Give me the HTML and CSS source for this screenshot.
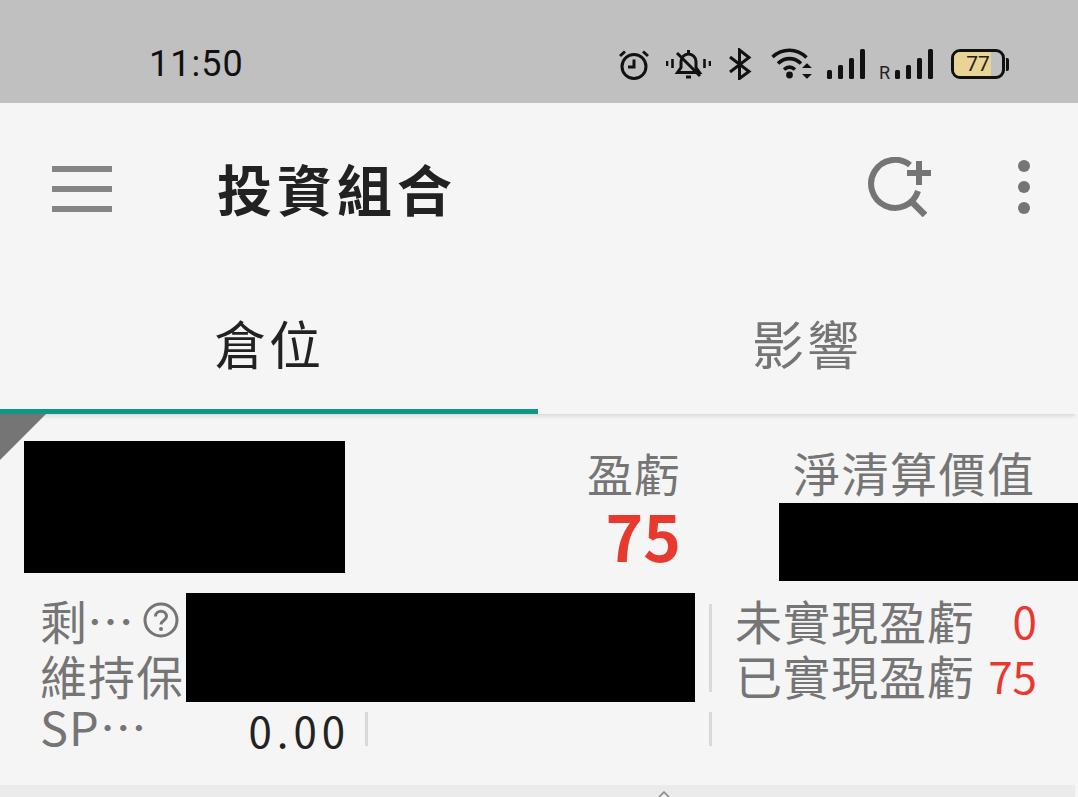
FILE: index.html
```html
<!DOCTYPE html>
<html lang="zh-Hant">
<head>
    <meta charset="UTF-8">
    <meta name="viewport" content="width=device-width, initial-scale=1.0">
    <title>投資組合</title>
    <link rel="stylesheet" href="styles.css">
</head>
<body>
    <div class="status-bar">
        <span class="clock">11:50</span>
        <div class="status-icons">
            <svg class="ic-alarm" viewBox="0 0 30 30" fill="none" stroke="#111" stroke-width="3">
                <circle cx="15" cy="16.5" r="12"/>
                <path d="M15 9.500v7.500h-6M1 6l5-4.500M29 6l-5-4.500"/>
            </svg>
            <svg class="ic-bell" viewBox="0 0 45 30" fill="none" stroke="#111" stroke-width="3">
                <path d="M1 12v5M6.500 10v9M38.500 10v9M44 12v5" stroke-width="2.600"/>
                <path d="M11.500 23.500h22l-3.500-5v-6a7.500 7.500 0 0 0-15 0v6zM22.500 1v3M20 28h5M11 4l23 23"/>
            </svg>
            <svg class="ic-bluetooth" viewBox="0 0 24 32" fill="none" stroke="#111" stroke-width="3">
                <path d="M2 9l19 14.500-9.500 7V2l9.500 7.500L2 24"/>
            </svg>
            <svg class="ic-wifi" viewBox="0 0 41 32" fill="none" stroke="#111" stroke-width="3.600">
                <path d="M1.500 10c10-9 24-9 34 .5M7 16.500c7-6.500 16-6.500 23 0M13 22.500c3.500-3 7.500-3 11 0"/>
                <circle cx="18.500" cy="28" r="3.400" fill="#111" stroke="none"/>
                <path d="M36 17l-3.500 3.500h7zM36 31l-3.500-3.500h7z" fill="#111" stroke="#111" stroke-width="1.200"/>
            </svg>
            <svg class="ic-signal" viewBox="0 0 38 30" fill="#111">
                <rect x="0" y="21" width="5" height="9" rx="1.500"/>
                <rect x="11" y="16" width="5" height="14" rx="1.500"/>
                <rect x="22" y="9" width="5" height="21" rx="1.500"/>
                <rect x="33" y="0" width="5" height="30" rx="1.500"/>
            </svg>
            <div class="signal-roaming">
                <span class="roaming-mark">R</span>
                <svg class="ic-signal" viewBox="0 0 38 30" fill="#111">
                    <rect x="0" y="21" width="5" height="9" rx="1.500"/>
                    <rect x="11" y="16" width="5" height="14" rx="1.500"/>
                    <rect x="22" y="9" width="5" height="21" rx="1.500"/>
                    <rect x="33" y="0" width="5" height="30" rx="1.500"/>
                </svg>
            </div>
            <div class="battery">
                <div class="battery-body">
                    <div class="battery-fill" style="width: 77%"></div>
                    <span class="battery-level">77</span>
                </div>
                <div class="battery-cap"></div>
            </div>
        </div>
    </div>

    <header class="toolbar">
        <div class="menu-btn">
            <span></span><span></span><span></span>
        </div>
        <h1 class="title">投資組合</h1>
        <svg class="ic-search-add" viewBox="0 0 64 60" fill="none" stroke="#757575" stroke-width="6">
            <path d="M42 8A24 24 0 1 0 50 34"/>
            <path d="M44 45l13 13" stroke-width="6.500"/>
            <path d="M39 16h24M51 4v24"/>
        </svg>
        <div class="more-btn">
            <span></span><span></span><span></span>
        </div>
    </header>

    <nav class="tabs">
        <div class="tab tab-active">倉位</div>
        <div class="tab">影響</div>
    </nav>

    <main class="portfolio">
        <div class="corner-mark"></div>

        <section class="summary">
            <div class="redacted redacted-name"></div>
            <div class="summary-pnl">
                <div class="summary-label">盈虧</div>
                <div class="summary-value">75</div>
            </div>
            <div class="summary-nlv">
                <div class="summary-label">淨清算價值</div>
                <div class="redacted redacted-nlv"></div>
            </div>
        </section>

        <section class="details">
            <div class="detail-label detail-help">剩⋯
                <svg class="ic-help" viewBox="0 0 36 36" fill="none" stroke="#757575" stroke-width="3">
                    <circle cx="18" cy="18" r="16"/>
                    <path d="M12.500 14.500c0-7 11-7 11 0 0 4-5.500 4-5.500 8"/>
                    <circle cx="18" cy="27" r="2" fill="#757575" stroke="none"/>
                </svg>
            </div>
            <div class="redacted redacted-margin"></div>
            <div class="divider divider-tall"></div>
            <div class="pnl-row"><span>未實現盈虧</span><b>0</b></div>
            <div class="detail-label">維持保</div>
            <div class="pnl-row"><span>已實現盈虧</span><b>75</b></div>
            <div class="detail-label detail-sp">SP⋯</div>
            <div class="sp-cell">
                <span class="sp-value">0.00</span>
                <div class="divider"></div>
            </div>
            <div class="divider"></div>
        </section>
    </main>

    <div class="next-card">
        <svg class="ic-caret" viewBox="0 0 12 6" fill="none" stroke="#888" stroke-width="1.500">
            <path d="M1 6l5-5 5 5"/>
        </svg>
    </div>
</body>
</html>
```

FILE: styles.css
```css
:root {
    --bar: #c0c0c0;
    --surface: #f5f5f5;
    --grey: #757575;
    --teal: #0f9688;
    --red: #e8392f;
    --line: #d9d9d9;
}

* {
    box-sizing: border-box;
    margin: 0;
    padding: 0;
}

body {
    width: 1078px;
    height: 797px;
    overflow: hidden;
    background: var(--surface);
    font-family: "Noto Sans CJK TC", "Noto Sans", sans-serif;
    color: #222;
}

/* status bar */
.status-bar {
    height: 103px;
    background: var(--bar);
    display: flex;
    align-items: center;
    padding: 25px 69px 0 149px;
    justify-content: space-between;
}

.clock {
    font-family: Roboto, sans-serif;
    font-size: 36px;
    letter-spacing: 1px;
    color: #111;
}

.status-icons {
    display: flex;
    align-items: center;
}

.ic-alarm {
    width: 30px;
    height: 30px;
    margin-top: 2px;
}

.ic-bell {
    width: 45px;
    height: 30px;
    margin-left: 17px;
}

.ic-bluetooth {
    width: 24px;
    height: 32px;
    margin-left: 17px;
}

.ic-wifi {
    width: 41px;
    height: 32px;
    margin-left: 19px;
    margin-top: -3px;
}

.ic-signal {
    width: 38px;
    height: 30px;
    display: block;
}

.status-icons > .ic-signal {
    margin-left: 15px;
}

.signal-roaming {
    display: flex;
    align-items: flex-end;
    margin-left: 14px;
    gap: 5px;
}

.roaming-mark {
    font-family: Roboto, sans-serif;
    font-size: 18px;
    line-height: 14px;
    color: #222;
    margin-bottom: -1px;
}

.battery {
    display: flex;
    align-items: center;
    margin-left: 18px;
}

.battery-body {
    position: relative;
    width: 54px;
    height: 30px;
    border: 3px solid #111;
    border-radius: 9px;
    overflow: hidden;
}

.battery-fill {
    height: 100%;
    background: #e8d595;
}

.battery-level {
    position: absolute;
    top: 0;
    left: 0;
    width: 100%;
    text-align: center;
    font-family: Roboto, sans-serif;
    font-size: 21px;
    line-height: 24px;
    color: #222;
}

.battery-cap {
    width: 3px;
    height: 13px;
    margin-left: 1px;
    background: #111;
    border-radius: 0 2px 2px 0;
}

/* toolbar */
.toolbar {
    height: 172px;
    display: flex;
    align-items: flex-start;
    padding: 52px 0 0 52px;
}

.menu-btn {
    width: 60px;
    height: 46px;
    margin-top: 11px;
    display: flex;
    flex-direction: column;
    justify-content: space-between;
}

.menu-btn span {
    height: 6px;
    background: #858585;
}

.title {
    font-size: 55px;
    font-weight: 700;
    line-height: 64px;
    letter-spacing: 5px;
    margin-left: 105px;
    width: 651px;
    color: #222;
}

.ic-search-add {
    width: 64px;
    height: 60px;
    margin-top: 2px;
}

.more-btn {
    width: 12px;
    height: 54px;
    margin: 5px 0 0 86px;
    display: flex;
    flex-direction: column;
    justify-content: space-between;
}

.more-btn span {
    height: 12px;
    border-radius: 50%;
    background: var(--grey);
}

/* tabs */
.tabs {
    height: 139px;
    display: flex;
    box-shadow: 0 5px 4px -3px rgba(0, 0, 0, 0.12);
    position: relative;
}

.tab {
    width: 538px;
    padding-top: 33px;
    text-align: center;
    font-size: 52px;
    line-height: 70px;
    letter-spacing: 3px;
    color: var(--grey);
}

.tab-active {
    color: #222;
    border-bottom: 5px solid var(--teal);
}

/* portfolio card */
.portfolio {
    position: relative;
    height: 371px;
    padding-top: 27px;
}

.corner-mark {
    position: absolute;
    top: 0;
    left: 0;
    width: 46px;
    height: 46px;
    background: var(--grey);
    clip-path: polygon(0 0, 100% 0, 0 100%);
}

.summary {
    display: flex;
    height: 152px;
    padding-left: 24px;
}

.redacted {
    background: #000;
}

.redacted-name {
    width: 321px;
    height: 132px;
}

.summary-pnl {
    width: 336px;
    text-align: right;
}

.summary-label {
    font-size: 46px;
    line-height: 62px;
    letter-spacing: 1px;
    color: var(--grey);
}

.summary-value {
    font-size: 64px;
    font-weight: 700;
    line-height: 62px;
    color: var(--red);
}

.summary-nlv {
    margin-left: 98px;
    flex: 1;
}

.summary-nlv .summary-label {
    padding-left: 14px;
    font-size: 47px;
    letter-spacing: 1.500px;
    white-space: nowrap;
}

.redacted-nlv {
    width: 299px;
    height: 78px;
}

.details {
    display: grid;
    grid-template-columns: 146px 509px 17px 1fr;
    grid-template-rows: 54px 55px 44px;
    padding-left: 40px;
    align-items: center;
}

.detail-label {
    font-size: 47px;
    line-height: 54px;
    letter-spacing: 1px;
    white-space: nowrap;
    color: var(--grey);
}

.detail-help {
    display: flex;
    align-items: center;
    letter-spacing: 0;
}

.ic-help {
    width: 36px;
    height: 36px;
    margin-left: 9px;
}

.detail-sp {
    align-self: end;
    line-height: 46px;
    margin-bottom: -3px;
}

.redacted-margin {
    grid-column: 2;
    grid-row: 1 / 3;
    height: 109px;
}

.divider {
    width: 3px;
    height: 34px;
    background: var(--line);
    justify-self: end;
}

.divider-tall {
    grid-column: 3;
    grid-row: 1 / 3;
    height: 88px;
}

.pnl-row {
    grid-column: 4;
    width: 325px;
    padding-left: 23px;
    display: flex;
    justify-content: space-between;
    align-items: center;
    font-size: 47px;
    line-height: 54px;
    letter-spacing: 1px;
    white-space: nowrap;
    color: var(--grey);
}

.pnl-row b {
    font-weight: 400;
    font-size: 44px;
    letter-spacing: 0;
    color: var(--red);
}

.sp-cell {
    display: flex;
    align-items: center;
    align-self: end;
    height: 34px;
}

.sp-value {
    width: 164px;
    text-align: right;
    font-size: 42px;
    letter-spacing: 5px;
    color: #222;
}

.sp-cell .divider {
    margin-left: 15px;
}

.details > .divider:last-child {
    grid-column: 3;
    grid-row: 3;
    align-self: end;
}

.next-card {
    height: 12px;
    width: 1075px;
    background: #ebebeb;
    display: flex;
    justify-content: center;
    padding-left: 253px;
}

.ic-caret {
    width: 12px;
    height: 6px;
    margin-top: 6px;
}
```
